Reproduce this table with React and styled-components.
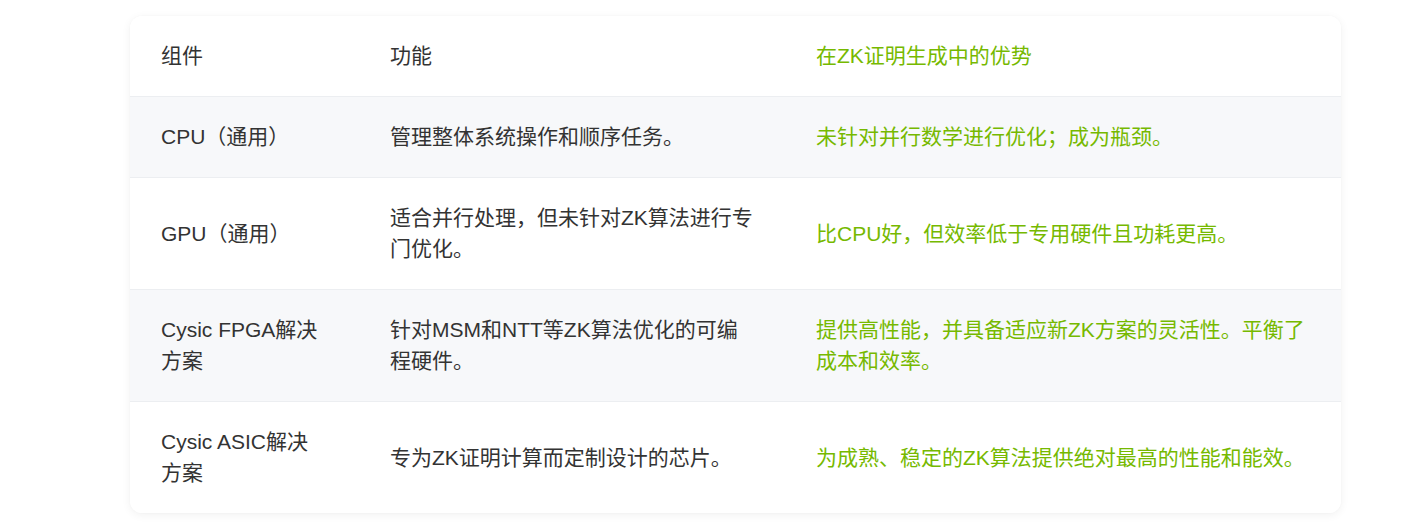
import React from "react";
import styled, { createGlobalStyle } from "styled-components";

const Global = createGlobalStyle`
  html, body { margin: 0; padding: 0; background: #ffffff; }
  body { font-family: "Liberation Sans", "Noto Sans CJK SC", sans-serif; }
`;

const Page = styled.div`
  padding: 16px 0 15px 130px;
`;

const Card = styled.div`
  width: 1211px;
  background: #fff;
  border-radius: 12px;
  box-shadow: 0 2px 10px rgba(0, 0, 0, 0.06), 0 0 2px rgba(0, 0, 0, 0.03);
  overflow: hidden;
`;

const Table = styled.table`
  width: 100%;
  border-collapse: collapse;
  table-layout: fixed;
  font-size: 21px;
  line-height: 31px;
  color: #333;
`;

const Row = styled.tr`
  background: ${(p) => (p.$alt ? "#f7f8fa" : "#ffffff")};
  border-bottom: ${(p) => (p.$last ? "none" : "1px solid #eceef1")};
`;

const Cell = styled.td`
  padding: 24px 31px 25px;
  vertical-align: middle;
  text-align: left;
  font-weight: 400;
  color: ${(p) => (p.$green ? "#76b900" : "#333333")};
`;

const HeadCell = styled(Cell).attrs({ as: "th" })``;

const rows = [
  ["CPU（通用）", "管理整体系统操作和顺序任务。", "未针对并行数学进行优化；成为瓶颈。"],
  ["GPU（通用）", "适合并行处理，但未针对ZK算法进行专门优化。", "比CPU好，但效率低于专用硬件且功耗更高。"],
  ["Cysic FPGA解决方案", "针对MSM和NTT等ZK算法优化的可编程硬件。", "提供高性能，并具备适应新ZK方案的灵活性。平衡了成本和效率。"],
  ["Cysic ASIC解决方案", "专为ZK证明计算而定制设计的芯片。", "为成熟、稳定的ZK算法提供绝对最高的性能和能效。"],
];

export default function App() {
  return (
    <>
      <Global />
      <Page>
        <Card>
          <Table>
            <colgroup>
              <col style={{ width: 229 }} />
              <col style={{ width: 426 }} />
              <col />
            </colgroup>
            <thead>
              <Row>
                <HeadCell>组件</HeadCell>
                <HeadCell>功能</HeadCell>
                <HeadCell $green>在ZK证明生成中的优势</HeadCell>
              </Row>
            </thead>
            <tbody>
              {rows.map((r, i) => (
                <Row key={i} $alt={i % 2 === 0} $last={i === rows.length - 1}>
                  <Cell>{r[0]}</Cell>
                  <Cell>{r[1]}</Cell>
                  <Cell $green>{r[2]}</Cell>
                </Row>
              ))}
            </tbody>
          </Table>
        </Card>
      </Page>
    </>
  );
}
